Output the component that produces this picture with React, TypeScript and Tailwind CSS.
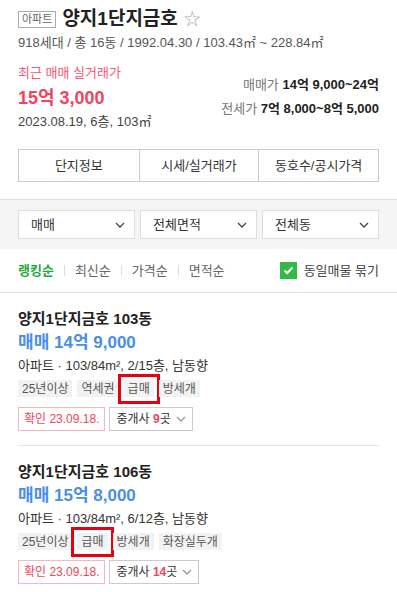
import React from "react";

const font = { fontFamily: '"Liberation Sans", "Noto Sans CJK KR", sans-serif' };

function Chevron({ className = "" }: { className?: string }) {
  return (
    <svg width="10" height="6" viewBox="0 0 10 6" className={className}>
      <polyline points="1,1 5,5 9,1" fill="none" stroke="currentColor" strokeWidth="1.3" />
    </svg>
  );
}

function Tag({ children, mark }: { children: React.ReactNode; mark?: boolean }) {
  return (
    <span className="relative inline-flex h-[17px] items-center bg-[#f2f2f2] px-[4px] text-[12px] text-[#555]">
      {children}
      {mark && (
        <span className="pointer-events-none absolute -inset-x-[6px] -top-[6px] -bottom-[7px] border-[3px] border-[#e50012]" />
      )}
    </span>
  );
}

function Listing({
  dong,
  price,
  info,
  tags,
  agents,
}: {
  dong: string;
  price: string;
  info: string;
  tags: { t: string; mark?: boolean }[];
  agents: string;
}) {
  return (
    <div className="px-[18px] pt-[16px] pb-[14px]">
      <div className="h-[20px] text-[15px] font-bold leading-[20px] text-[#222]">양지1단지금호 {dong}동</div>
      <div className="mt-[2px] h-[24px] text-[17px] font-bold leading-[24px] text-[#4b8ee6]">매매 {price}</div>
      <div className="mt-[1px] h-[20px] text-[13px] leading-[20px] text-[#333]">{info}</div>
      <div className="mt-[4px] flex gap-[5px]">
        {tags.map((t, i) => (
          <Tag key={i} mark={t.mark}>
            {t.t}
          </Tag>
        ))}
      </div>
      <div className="mt-[10px] flex gap-[4px]">
        <span className="flex h-[24px] items-center border border-[#f7b6c2] px-[5px] text-[12px] text-[#f2445e]">
          확인 23.09.18.
        </span>
        <span className="flex h-[24px] items-center gap-[5px] border border-[#ccc] px-[6px] text-[12px] text-[#333]">
          <span>
            중개사 <span className="font-bold text-[#f2445e]">{agents}</span>곳
          </span>
          <Chevron className="text-[#999]" />
        </span>
      </div>
    </div>
  );
}

export default function App() {
  return (
    <div className="w-[397px] bg-white" style={font}>
      {/* header */}
      <div className="px-[18px] pt-[8px]">
        <div className="flex h-[22px] items-center">
          <span className="flex h-[17px] items-center border border-[#aaa] px-[3px] text-[11px] text-[#666]">아파트</span>
          <span className="ml-[6px] text-[19px] font-bold text-[#222]">양지1단지금호</span>
          <span className="ml-[6px] text-[17px] leading-none text-[#aaa]">☆</span>
        </div>
        <div className="mt-[3px] h-[20px] text-[13px] leading-[20px] text-[#555]">
          918세대 / 총 16동 / 1992.04.30 / 103.43㎡ ~ 228.84㎡
        </div>
        <div className="flex justify-between">
          <div>
            <div className="mt-[10px] h-[20px] text-[13px] leading-[20px] text-[#f25a77]">최근 매매 실거래가</div>
            <div className="mt-[4px] h-[22px] text-[18px] font-bold leading-[22px] text-[#f2445e]">15억 3,000</div>
            <div className="mt-[3px] h-[20px] text-[13px] leading-[20px] text-[#444]">2023.08.19, 6층, 103㎡</div>
          </div>
          <div className="pt-[22px] text-right text-[13px]">
            <div className="h-[20px] leading-[20px]">
              <span className="text-[#777]">매매가 </span>
              <span className="font-bold text-[#222]">14억 9,000~24억</span>
            </div>
            <div className="mt-[4px] h-[20px] leading-[20px]">
              <span className="text-[#777]">전세가 </span>
              <span className="font-bold text-[#222]">7억 8,000~8억 5,000</span>
            </div>
          </div>
        </div>
        <div className="mt-[17px] grid h-[33px] grid-cols-3 border border-[#ccc] text-[13px] text-[#333]">
          <div className="flex items-center justify-center">단지정보</div>
          <div className="flex items-center justify-center border-l border-[#ccc]">시세/실거래가</div>
          <div className="flex items-center justify-center border-l border-[#ccc]">동호수/공시가격</div>
        </div>
      </div>

      {/* filters */}
      <div className="mt-[17px] border-t border-[#ddd] bg-[#f5f5f5] px-[18px] py-[10px]">
        <div className="grid grid-cols-3 gap-[5px]">
          {["매매", "전체면적", "전체동"].map((s) => (
            <div
              key={s}
              className="flex h-[29px] items-center justify-between border border-[#ddd] bg-white pl-[12px] pr-[9px] text-[13px] text-[#333]"
            >
              <span>{s}</span>
              <Chevron className="text-[#444]" />
            </div>
          ))}
        </div>
      </div>

      {/* sort row */}
      <div className="flex h-[44px] items-center justify-between border-b border-[#e5e5e5] px-[18px] text-[13px]">
        <div className="flex items-center">
          <span className="font-bold text-[#1fa83b]">랭킹순</span>
          <span className="mx-[10px] h-[11px] w-px bg-[#ddd]" />
          <span className="text-[#666]">최신순</span>
          <span className="mx-[10px] h-[11px] w-px bg-[#ddd]" />
          <span className="text-[#666]">가격순</span>
          <span className="mx-[10px] h-[11px] w-px bg-[#ddd]" />
          <span className="text-[#666]">면적순</span>
        </div>
        <div className="flex items-center gap-[7px]">
          <span className="flex h-[17px] w-[17px] items-center justify-center bg-[#34b849]">
            <svg width="11" height="9" viewBox="0 0 11 9">
              <polyline points="1.5,4.5 4.2,7 9.5,1.5" fill="none" stroke="white" strokeWidth="2" />
            </svg>
          </span>
          <span className="text-[#444]">동일매물 묶기</span>
        </div>
      </div>

      <Listing
        dong="103"
        price="14억 9,000"
        info="아파트 · 103/84m², 2/15층, 남동향"
        tags={[{ t: "25년이상" }, { t: "역세권" }, { t: "급매", mark: true }, { t: "방세개" }]}
        agents="9"
      />
      <div className="mx-[18px] h-px bg-[#e5e5e5]" />
      <Listing
        dong="106"
        price="15억 8,000"
        info="아파트 · 103/84m², 6/12층, 남동향"
        tags={[{ t: "25년이상" }, { t: "급매", mark: true }, { t: "방세개" }, { t: "화장실두개" }]}
        agents="14"
      />
    </div>
  );
}
